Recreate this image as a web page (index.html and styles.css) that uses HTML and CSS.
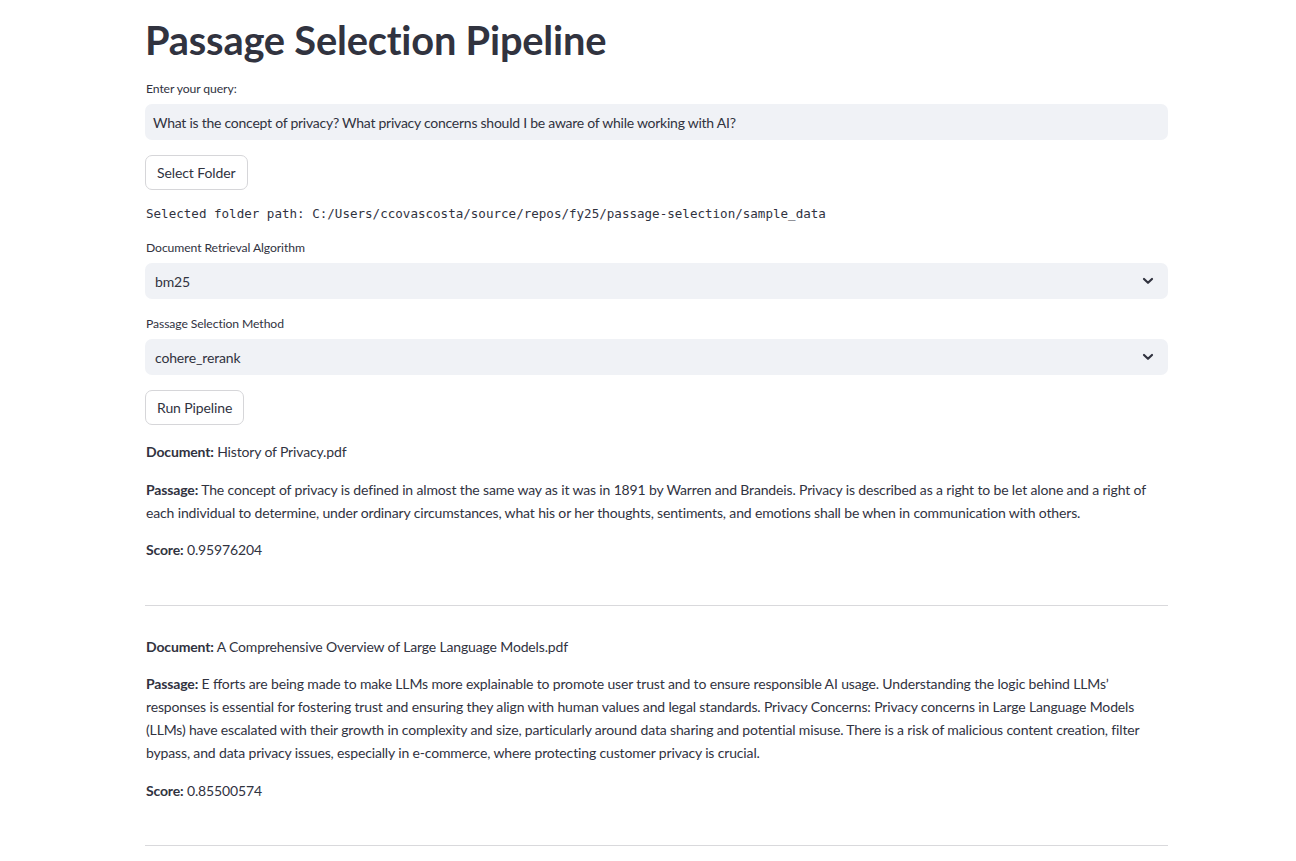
FILE: index.html
```html
<!DOCTYPE html>
<html lang="en">
<head>
<meta charset="utf-8">
<title>Passage Selection Pipeline</title>
<link rel="stylesheet" href="styles.css">
</head>
<body>
<main class="main">
  <h1 class="title">Passage Selection Pipeline</h1>

  <div class="field">
    <label class="label">Enter your query:</label>
    <div class="input">What is the concept of privacy? What privacy concerns should I be aware of while working with AI?</div>
  </div>

  <button class="btn">Select Folder</button>

  <div class="code">Selected folder path: C:/Users/ccovascosta/source/repos/fy25/passage-selection/sample_data</div>

  <div class="field">
    <label class="label">Document Retrieval Algorithm</label>
    <div class="select">
      <span>bm25</span>
      <svg class="chev" width="12" height="8" viewBox="0 0 12 8"><path d="M2 2 L6 5.8 L10 2" fill="none" stroke="#31333f" stroke-width="2.2" stroke-linecap="round" stroke-linejoin="round"/></svg>
    </div>
  </div>

  <div class="field">
    <label class="label">Passage Selection Method</label>
    <div class="select">
      <span>cohere_rerank</span>
      <svg class="chev" width="12" height="8" viewBox="0 0 12 8"><path d="M2 2 L6 5.8 L10 2" fill="none" stroke="#31333f" stroke-width="2.2" stroke-linecap="round" stroke-linejoin="round"/></svg>
    </div>
  </div>

  <button class="btn">Run Pipeline</button>

  <section class="result">
    <p><b>Document:</b> History of Privacy.pdf</p>
    <p><b>Passage:</b> The concept of privacy is defined in almost the same way as it was in 1891 by Warren and Brandeis. Privacy is described as a right to be let alone and a right of each individual to determine, under ordinary circumstances, what his or her thoughts, sentiments, and emotions shall be when in communication with others.</p>
    <p><b>Score:</b> 0.95976204</p>
  </section>
  <hr class="divider">

  <section class="result">
    <p><b>Document:</b> A Comprehensive Overview of Large Language Models.pdf</p>
    <p><b>Passage:</b> E ﬀorts are being made to make LLMs more explainable to promote user trust and to ensure responsible AI usage. Understanding the logic behind LLMs’ responses is essential for fostering trust and ensuring they align with human values and legal standards. Privacy Concerns: Privacy concerns in Large Language Models (LLMs) have escalated with their growth in complexity and size, particularly around data sharing and potential misuse. There is a risk of malicious content creation, filter bypass, and data privacy issues, especially in e-commerce, where protecting customer privacy is crucial.</p>
    <p><b>Score:</b> 0.85500574</p>
  </section>
  <hr class="divider">
</main>
</body>
</html>
```

FILE: styles.css
```css
html, body {
  margin: 0;
  padding: 0;
  background: #ffffff;
}
body {
  font-family: "Lato", "Noto Sans", sans-serif;
  color: #31333f;
  font-size: 14px;
  letter-spacing: -0.15px;
}
.main {
  width: 1023px;
  margin-left: 145px;
  padding-top: 16px;
  display: flex;
  flex-direction: column;
  align-items: flex-start;
}
.title {
  font-size: 39.8px;
  font-weight: 700;
  line-height: 48px;
  margin: 0 0 16px 0;
  letter-spacing: -0.2px;
  color: #31333f;
}
.field {
  width: 100%;
  display: flex;
  flex-direction: column;
}
.label {
  font-size: 12.2px;
  letter-spacing: -0.1px;
  line-height: 18px;
  margin-bottom: 6px;
  margin-left: 1px;
}
.input {
  height: 36px;
  background: #f0f2f6;
  border-radius: 7px;
  padding: 0 8px;
  display: flex;
  align-items: center;
  letter-spacing: -0.25px;
}
.btn {
  margin-top: 15px;
  height: 35px;
  padding: 0 11px;
  border: 1px solid #d6d6d9;
  border-radius: 7px;
  background: #fff;
  font-family: inherit;
  font-size: 14px;
  letter-spacing: -0.1px;
  color: #31333f;
}
.code {
  font-family: "DejaVu Sans Mono", monospace;
  font-size: 12.55px;
  letter-spacing: 0;
  line-height: 18px;
  margin: 15px 0 16px 1px;
}
.select {
  height: 36px;
  background: #f0f2f6;
  border-radius: 7px;
  padding: 0 14px 0 10px;
  display: flex;
  align-items: center;
  justify-content: space-between;
}
.field + .field { margin-top: 16px; }
.chev { display: block; }
.result {
  width: 100%;
  margin-top: 15px;
}
.result p {
  margin: 0 0 14.5px 0;
  line-height: 23px;
  padding-left: 1px;
}
.result b { font-weight: 700; }
.divider {
  width: 100%;
  border: none;
  border-top: 1px solid #d9d9dc;
  margin: 29px 0 29px 0;
}
.divider + .result { margin-top: 0; }
```
